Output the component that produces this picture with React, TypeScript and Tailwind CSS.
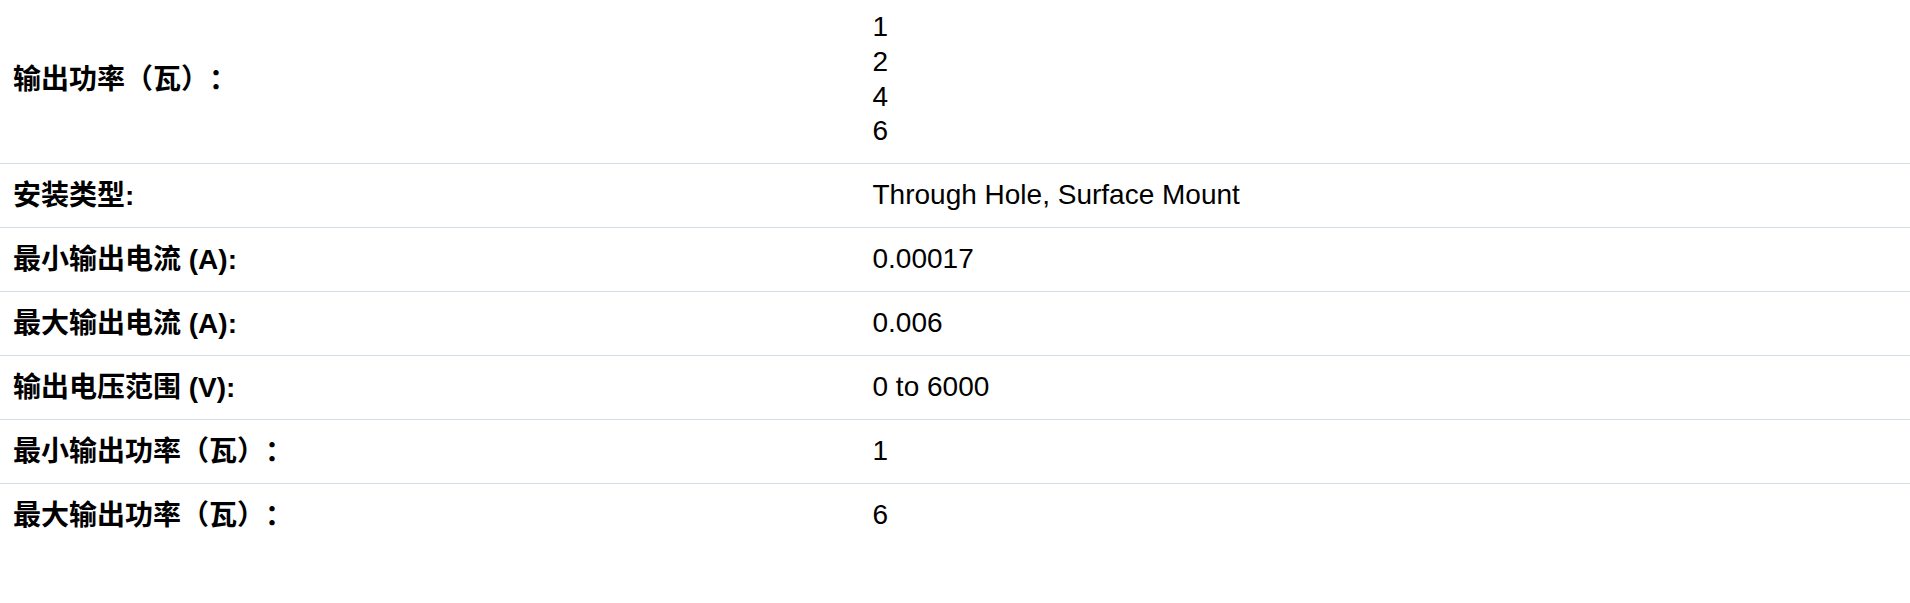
const specs = [
  { label: "输出功率（瓦）：", values: ["1", "2", "4", "6"] },
  { label: "安装类型:", values: ["Through Hole, Surface Mount"] },
  { label: "最小输出电流 (A):", values: ["0.00017"] },
  { label: "最大输出电流 (A):", values: ["0.006"] },
  { label: "输出电压范围 (V):", values: ["0 to 6000"] },
  { label: "最小输出功率（瓦）：", values: ["1"] },
  { label: "最大输出功率（瓦）：", values: ["6"] }
];

export default function App() {
  return (
    <div className="min-h-[603px] w-full bg-white font-['Liberation_Sans','Noto_Sans_CJK_SC',sans-serif] text-[28px] text-black">
      <div className="flex flex-col">
        {specs.map((row, i) => (
          <div
            key={row.label}
            className={
              (i === 0 ? "pt-[10px] pb-[14px] " : "py-3 ") +
              (i < specs.length - 1 ? "border-b border-[#d5dde5] " : "") +
              "grid grid-cols-[45%_55%] items-center"
            }
          >
            <div className="px-[13px] font-bold leading-[39px] [text-spacing-trim:space-all]">
              {row.label}
            </div>
            <div className="px-[13px] leading-[34.75px]">
              {row.values.map((v) => (
                <div key={v}>{v}</div>
              ))}
            </div>
          </div>
        ))}
      </div>
    </div>
  );
}
